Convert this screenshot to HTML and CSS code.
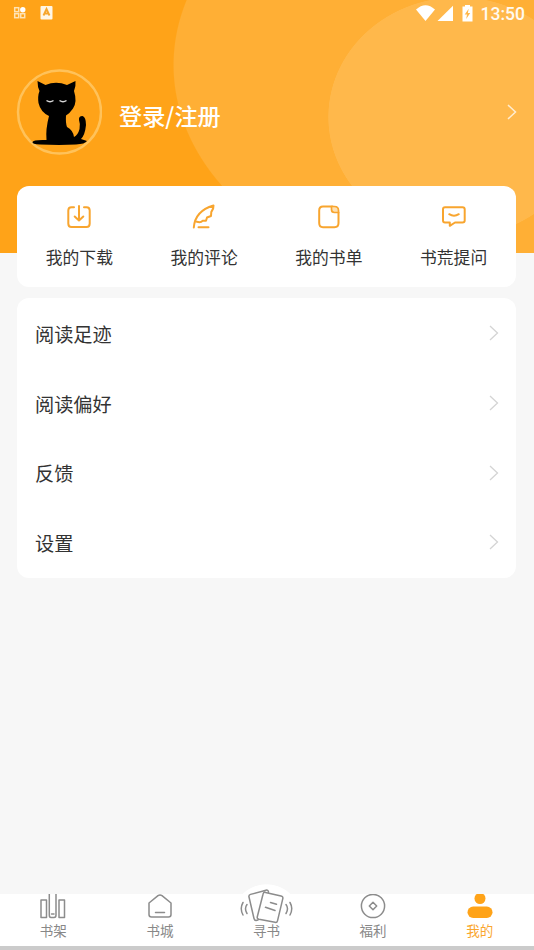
FILE: index.html
```html
<!DOCTYPE html>
<html lang="zh-CN">
<head>
<meta charset="utf-8">
<title>我的</title>
<link rel="stylesheet" href="styles.css">
</head>
<body>
<div class="screen">
  <header class="hero">
    <div class="status">
      <svg class="status-left" width="44" height="16" viewBox="0 0 44 16">
        <g fill="none" stroke="#ffe3b5" stroke-width="1.500"><rect x="4.700" y="2.700" width="4" height="4"/><rect x="4.700" y="8.700" width="4" height="4"/><rect x="10.700" y="8.700" width="4" height="4"/></g>
        <circle cx="12.800" cy="4.700" r="2.700" fill="#fff"/>
        <rect x="30.500" y="1" width="12" height="13.500" rx="1" fill="#fff6e6"/>
        <path d="M33.500 10.500L36.500 4L39.500 10.500M34.500 8.500H38.500" fill="none" stroke="#f6a52c" stroke-width="1.800"/>
      </svg>
      <div class="status-right">
        <svg width="60" height="18" viewBox="0 0 60 18" fill="#fff">
          <path d="M0 4.500Q9.500-4 19 4.500L9.500 16Z"/>
          <path d="M37 .8V16H21.500Z"/>
          <path d="M49 1.500V0H54V1.500H56.500V16.500H46.500V1.500Z"/>
          <path d="M52.700 3.700L48.700 9.500H51L50.200 14L54.200 8H51.900Z" fill="#ffb84b"/>
        </svg>
        <span class="clock">13:50</span>
      </div>
    </div>
    <div class="profile">
      <svg class="avatar" width="86" height="86" viewBox="0 0 86 86">
        <circle cx="43.500" cy="43" r="41.500" fill="none" stroke="#ffc25a" stroke-width="2.500"/>
        <path d="M21.500 12L29.500 16Q40 11.500 51 16L59.500 12Q60 17 58 22Q61.500 33 57 39.500Q54 44 50 46.500Q49.500 54 51 58Q57 61 58 68Q62 66 63.500 60Q64.500 55 63 51Q62.500 47 66.500 47Q70 48 70 56Q69 66 65 70L71 72Q69 75 60 75.500L43 76L24 75.500Q16 75 16.500 73Q17 70.500 30.500 71Q29.500 60 33 47Q24.500 43 22.500 34Q21.500 27 23.500 22Q21.500 18 21.500 12Z" fill="#000"/>
        <path d="M30.500 31.500Q34 34 37.500 31.500M43.500 31.500Q47 34 50.500 31.500" fill="none" stroke="#d7d7d7" stroke-width="1.500"/>
      </svg>
      <span class="name">登录/注册</span>
      <svg class="go" width="12" height="18" viewBox="0 0 12 18"><path d="M2 2L9.500 9L2 16" fill="none" stroke="#ffecd0" stroke-width="1.500"/></svg>
    </div>
  </header>

  <main class="content">
    <section class="card actions">
      <a class="action">
        <svg width="28" height="28" viewBox="0 0 28 28"><path d="M9 5.200H6.500Q3.300 5.200 3.300 8.500V21.500Q3.300 25 6.500 25H21.500Q24.700 25 24.700 21.500V8.500Q24.700 5.200 21.500 5.200H19M14 4V18M9.700 14.500L14 18.500L18.300 14.500"/></svg>
        <span>我的下载</span>
      </a>
      <a class="action">
        <svg width="28" height="28" viewBox="0 0 28 28"><path d="M3.800 25.500Q5 9 23.500 3.500Q23.800 7 21.300 10L21 14L17 15.500L16 18.800H12.500Q11 20.800 6.800 19.800M8.500 25.200H18.500"/></svg>
        <span>我的评论</span>
      </a>
      <a class="action">
        <svg width="28" height="28" viewBox="0 0 28 28"><path d="M8 4.500H17.500L23.500 10.500V21Q23.500 25.200 19.500 25.200H8Q4.200 25.200 4.200 21V8.500Q4.200 4.500 8 4.500Z"/><path class="fold" d="M16.500 4.500H19.500Q23.500 4.500 23.500 8.500V10.500H19.500Q16.500 10.500 16.500 7.500Z"/></svg>
        <span>我的书单</span>
      </a>
      <a class="action">
        <svg width="28" height="28" viewBox="0 0 28 28"><path d="M5 5.200H22.500Q24.700 5.200 24.700 7.200V18.500Q24.700 20.500 22.500 20.500H15L9.800 23.800V20.500H5Q3 20.500 3 18.500V7.200Q3 5.200 5 5.200ZM9.200 12.200Q14 15.200 18.800 12.200"/></svg>
        <span>书荒提问</span>
      </a>
    </section>

    <section class="card list">
      <a class="row"><span>阅读足迹</span><svg class="chev" width="10" height="16" viewBox="0 0 10 16"><path d="M1 1L8.500 8L1 15"/></svg></a>
      <a class="row"><span>阅读偏好</span><svg class="chev" width="10" height="16" viewBox="0 0 10 16"><path d="M1 1L8.500 8L1 15"/></svg></a>
      <a class="row"><span>反馈</span><svg class="chev" width="10" height="16" viewBox="0 0 10 16"><path d="M1 1L8.500 8L1 15"/></svg></a>
      <a class="row"><span>设置</span><svg class="chev" width="10" height="16" viewBox="0 0 10 16"><path d="M1 1L8.500 8L1 15"/></svg></a>
    </section>
  </main>

  <nav class="tabs">
    <a class="tab">
      <svg width="28" height="26" viewBox="0 0 28 26"><path d="M2 6H7.500V23.500H2ZM20 6H25.500V23.500H20ZM10.300 0V21Q10.300 23.500 12 23.500H15Q17 23.500 17 21V0M12.500 20H15"/></svg>
      <span>书架</span>
    </a>
    <a class="tab">
      <svg width="28" height="26" viewBox="0 0 28 26"><path d="M3 9L12 1.600Q14 .2 16 1.600L25 9V20.500Q25 23 22.500 23H5.500Q3 23 3 20.500ZM9.500 18.500H18.500"/></svg>
      <span>书城</span>
    </a>
    <a class="tab tab-center">
      <svg width="56" height="36" viewBox="0 0 56 36"><path d="M20 36L18 36.500Q16.500 36.500 16 34.500L11 13Q10.500 11 12.500 10.400L28 6.200Q30 5.700 30.500 7.800M27.500 8.400L43 12Q45.300 12.500 44.800 14.700L39.500 36.800Q39 38.800 37 38.300L21 35.300Q18.800 34.800 19.300 32.800L25 10.200Q25.500 8 27.500 8.400ZM32.500 18.500L38.500 20.300M27.500 23.300L37 26.500M9 20.500Q6 24.500 9 29.500M5 18.500Q1.500 24.500 5 31M48 20.500Q51 24.500 48 29.500M52 18.500Q55.500 24.500 52 31"/></svg>
      <span>寻书</span>
    </a>
    <a class="tab">
      <svg width="28" height="26" viewBox="0 0 28 26"><circle cx="14" cy="12" r="11.600"/><path d="M14 8.300L17.700 12L14 15.700L10.300 12Z"/></svg>
      <span>福利</span>
    </a>
    <a class="tab active">
      <svg width="28" height="26" viewBox="0 0 28 26"><circle cx="14" cy="4.500" r="5.500"/><rect x="1.500" y="12.500" width="25" height="11.500" rx="5.700"/></svg>
      <span>我的</span>
    </a>
  </nav>
</div>
</body>
</html>
```
FILE: styles.css
```css
* { box-sizing: border-box; }
body { margin: 0; font-family: "Noto Sans CJK SC", sans-serif; color: #333; }
svg { display: block; }
.screen {
  width: 534px;
  height: 950px;
  display: flex;
  flex-direction: column;
  background: #f7f7f7;
  overflow: hidden;
}
.hero {
  height: 253px;
  flex: none;
  background:
    radial-gradient(ellipse 130px 120px at 458px 117px, #ffb84b 99.500%, transparent 100%),
    radial-gradient(ellipse 280px 215px at 453px 65px, #ffaf35 99.600%, transparent 100%),
    #ffa318;
}
.status {
  height: 28px;
  display: flex;
  justify-content: space-between;
  align-items: flex-start;
  padding: 5px 9px 0 10px;
}
.status-right { display: flex; gap: 5px; }
.clock { font: 500 17.500px/18px Roboto, sans-serif; color: #fffaf0; }
.profile { display: flex; align-items: center; height: 86px; margin-top: 41px; padding: 0 16px; }
.name { margin: 5px auto 0 17px; font-size: 23.200px; font-weight: 500; line-height: 32px; color: #fff; }
.content { padding: 0 18px 0 17px; margin-top: -67px; flex: 1; }
.card { background: #fff; border-radius: 12px; }
.actions { display: grid; grid-template-columns: repeat(4, 1fr); height: 101px; padding-top: 16px; }
.action { display: flex; flex-direction: column; align-items: center; gap: 14px; font-size: 16.800px; line-height: 26px; }
.action svg { fill: none; stroke: #f8a52f; stroke-width: 2; stroke-linecap: round; stroke-linejoin: round; }
.action .fold { fill: #fde0b2; stroke-width: 1.700; }
.list { margin-top: 11px; height: 280px; padding: 1px 17px 0 18px; }
.row { height: 69.700px; display: flex; justify-content: space-between; align-items: center; font-size: 19.200px; }
.chev { margin-top: -1px; fill: none; stroke: #d4d4d4; stroke-width: 1.300; }
.tabs {
  height: 56px;
  flex: none;
  display: grid;
  grid-template-columns: repeat(5, 1fr);
  padding-right: 1px;
  border-bottom: 4px solid #cbcbcb;
  background: #fff;
}
.tab { display: flex; flex-direction: column; align-items: center; font-size: 13.500px; line-height: 21px; color: #888; }
.tab svg { fill: none; stroke: #8c8c8c; stroke-width: 1.500; stroke-linejoin: round; stroke-linecap: round; }
.tab-center { margin-top: -10px; background: radial-gradient(circle 35px at 50% 35px, #fff 98%, transparent 100%); }
.tab-center svg { overflow: visible; }
.active { color: #faa72f; }
.tab.active svg { fill: #ffa318; stroke: none; }
```
